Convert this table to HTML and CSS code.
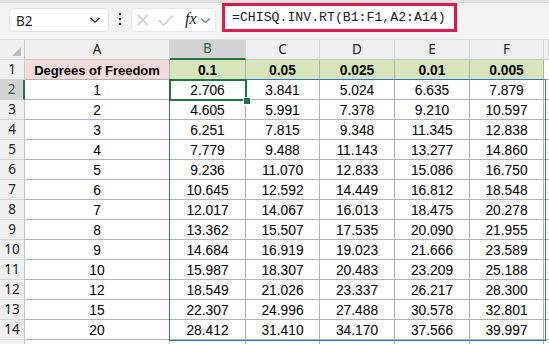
FILE: index.html
```html
<!DOCTYPE html>
<html>
<head>
<meta charset="utf-8">
<link rel="stylesheet" href="styles.css">
</head>
<body>
<div class="app">
  <div class="topstrip"></div>
  <div class="toolbar">
    <div class="namebox">
      <span class="nb-text">B2</span>
      <svg class="chev" width="12" height="8" viewBox="0 0 12 8"><path d="M1.5 2 L6 6.2 L10.5 2" fill="none" stroke="#333" stroke-width="1.3"/></svg>
    </div>
    <svg class="dots" width="4" height="14" viewBox="0 0 4 14"><circle cx="2" cy="2" r="1.3" fill="#333"/><circle cx="2" cy="7" r="1.3" fill="#333"/><circle cx="2" cy="12" r="1.3" fill="#333"/></svg>
    <div class="fxbox">
      <svg class="ic-x" width="12" height="12" viewBox="0 0 12 12"><path d="M1 1 L11 11 M11 1 L1 11" stroke="#c4c4c4" stroke-width="1.2" fill="none"/></svg>
      <svg class="ic-check" width="16" height="12" viewBox="0 0 16 12"><path d="M1 6.5 L5.5 11 L15 1.5" stroke="#c4c4c4" stroke-width="1.2" fill="none"/></svg>
      <span class="fx">fx</span>
      <svg class="chev2" width="11" height="7" viewBox="0 0 11 7"><path d="M1 1.5 L5.5 5.5 L10 1.5" fill="none" stroke="#777" stroke-width="1.2"/></svg>
    </div>
    <div class="formula">=CHISQ.INV.RT(B1:F1,A2:A14)</div>
  </div>
  <div class="sheet">
    <div class="grid">
      <div class="hd corner"><svg width="9" height="9" viewBox="0 0 9 9"><polygon points="9,0 9,9 0,9" fill="#bcbcbc"/></svg></div>
      <div class="hd col">A</div>
      <div class="hd col sel-col">B</div>
      <div class="hd col">C</div>
      <div class="hd col">D</div>
      <div class="hd col">E</div>
      <div class="hd col">F</div>
      <div class="hd col last"></div>

      <div class="hd row">1</div>
      <div class="c bold pink">Degrees of Freedom</div>
      <div class="c bold green">0.1</div>
      <div class="c bold green">0.05</div>
      <div class="c bold green">0.025</div>
      <div class="c bold green">0.01</div>
      <div class="c bold green">0.005</div>
      <div class="c last"></div>

      <div class="hd row sel-row">2</div>
      <div class="c">1</div><div class="c">2.706</div><div class="c">3.841</div><div class="c">5.024</div><div class="c">6.635</div><div class="c">7.879</div><div class="c last"></div>

      <div class="hd row">3</div>
      <div class="c">2</div><div class="c">4.605</div><div class="c">5.991</div><div class="c">7.378</div><div class="c">9.210</div><div class="c">10.597</div><div class="c last"></div>

      <div class="hd row">4</div>
      <div class="c">3</div><div class="c">6.251</div><div class="c">7.815</div><div class="c">9.348</div><div class="c">11.345</div><div class="c">12.838</div><div class="c last"></div>

      <div class="hd row">5</div>
      <div class="c">4</div><div class="c">7.779</div><div class="c">9.488</div><div class="c">11.143</div><div class="c">13.277</div><div class="c">14.860</div><div class="c last"></div>

      <div class="hd row">6</div>
      <div class="c">5</div><div class="c">9.236</div><div class="c">11.070</div><div class="c">12.833</div><div class="c">15.086</div><div class="c">16.750</div><div class="c last"></div>

      <div class="hd row">7</div>
      <div class="c">6</div><div class="c">10.645</div><div class="c">12.592</div><div class="c">14.449</div><div class="c">16.812</div><div class="c">18.548</div><div class="c last"></div>

      <div class="hd row">8</div>
      <div class="c">7</div><div class="c">12.017</div><div class="c">14.067</div><div class="c">16.013</div><div class="c">18.475</div><div class="c">20.278</div><div class="c last"></div>

      <div class="hd row">9</div>
      <div class="c">8</div><div class="c">13.362</div><div class="c">15.507</div><div class="c">17.535</div><div class="c">20.090</div><div class="c">21.955</div><div class="c last"></div>

      <div class="hd row">10</div>
      <div class="c">9</div><div class="c">14.684</div><div class="c">16.919</div><div class="c">19.023</div><div class="c">21.666</div><div class="c">23.589</div><div class="c last"></div>

      <div class="hd row">11</div>
      <div class="c">10</div><div class="c">15.987</div><div class="c">18.307</div><div class="c">20.483</div><div class="c">23.209</div><div class="c">25.188</div><div class="c last"></div>

      <div class="hd row">12</div>
      <div class="c">12</div><div class="c">18.549</div><div class="c">21.026</div><div class="c">23.337</div><div class="c">26.217</div><div class="c">28.300</div><div class="c last"></div>

      <div class="hd row">13</div>
      <div class="c">15</div><div class="c">22.307</div><div class="c">24.996</div><div class="c">27.488</div><div class="c">30.578</div><div class="c">32.801</div><div class="c last"></div>

      <div class="hd row">14</div>
      <div class="c">20</div><div class="c">28.412</div><div class="c">31.410</div><div class="c">34.170</div><div class="c">37.566</div><div class="c">39.997</div><div class="c last"></div>

      <div class="hd row"></div>
      <div class="c"></div><div class="c"></div><div class="c"></div><div class="c"></div><div class="c"></div><div class="c"></div><div class="c last"></div>
    </div>
    <div class="range"></div>
    <div class="active"></div>
    <div class="handle"></div>
  </div>
</div>
</body>
</html>
```

FILE: styles.css
```css
html, body {
  margin: 0;
  padding: 0;
  background: #ffffff;
  overflow: hidden;
}
.app {
  width: 549px;
  height: 344px;
  overflow: hidden;
  font-family: "Liberation Sans", Arial, sans-serif;
}
.topstrip {
  height: 3px;
  background: #e3e3e3;
  border-bottom: 1px solid #dadada;
  box-sizing: border-box;
}
.toolbar {
  height: 37px;
  background: #f3f3f3;
  display: flex;
  align-items: flex-end;
  padding: 0 0 7px 9px;
  box-sizing: border-box;
  border-bottom: 1px solid #dcdcdc;
}
.namebox {
  width: 100px;
  height: 24px;
  background: #ffffff;
  border: 1px solid #e1e1e1;
  border-radius: 4px;
  box-sizing: border-box;
  display: flex;
  align-items: center;
  justify-content: space-between;
  padding: 0 7px 0 6px;
  font-family: "Noto Sans", "Open Sans", sans-serif;
  font-size: 13.5px;
  color: #1f1f1f;
}
.nb-text {
  padding-top: 1px;
}
.dots {
  margin: 0 9px 6px 9px;
}
.fxbox {
  width: 85px;
  height: 24px;
  background: #ffffff;
  border: 1px solid #e6e6e6;
  border-radius: 4px;
  box-sizing: border-box;
  display: flex;
  align-items: center;
  padding: 0 3px 0 5px;
}
.ic-x {
  margin-right: 9px;
}
.ic-check {
  margin-right: 11px;
}
.fx {
  font-family: "Liberation Serif", "Times New Roman", serif;
  font-style: italic;
  font-size: 16px;
  color: #222;
  margin-right: 3px;
  margin-top: -2px;
}
.formula {
  margin-left: 6px;
  width: 235px;
  height: 29px;
  box-sizing: border-box;
  border: 3px solid #e0194f;
  background: #ffffff;
  font-family: "Liberation Mono", "Courier New", monospace;
  font-size: 13.2px;
  color: #1a1a1a;
  line-height: 23px;
  padding-left: 7px;
  white-space: nowrap;
}
.sheet {
  position: relative;
}
.grid {
  display: grid;
  grid-template-columns: 25px 145px 76px 74px 75px 75px 74px 5px;
  grid-auto-rows: 20px;
}
.hd {
  background: #f0f0f0;
  font-family: "Noto Sans", "Open Sans", sans-serif;
  font-size: 13.5px;
  color: #222;
  box-sizing: border-box;
  border-right: 1px solid #d4d4d4;
  border-bottom: 1px solid #d4d4d4;
  display: flex;
  align-items: center;
  justify-content: center;
  line-height: 1;
}
.corner {
  justify-content: flex-end;
  align-items: flex-end;
  padding: 0 3px 3px 0;
  border-right: 1px solid #c8c8c8;
}
.hd.col {
  border-bottom: 1px solid #c6c6c6;
}
.hd.row {
  border-right: 1px solid #c6c6c6;
}
.sel-col {
  background: #d3d3d3;
  color: #1d6b3f;
  border-bottom: 2px solid #217346 !important;
}
.sel-row {
  background: #d3d3d3;
  color: #1d6b3f;
  border-right: 2px solid #217346 !important;
}
.c {
  box-sizing: border-box;
  border-right: 1px solid #b2b2b2;
  border-bottom: 1px solid #b2b2b2;
  text-align: center;
  font-size: 13.8px;
  color: #000;
  line-height: 20px;
  padding-top: 1px;
  white-space: nowrap;
  overflow: hidden;
  background: #ffffff;
}
.c.last {
  border-right: none;
}
.bold {
  font-weight: bold;
}
.pink {
  background: #f2dcdb;
  font-size: 13px;
}
.green {
  background: #d8e4bc;
}
.range {
  position: absolute;
  left: 169px;
  top: 39px;
  width: 377px;
  height: 262px;
  box-sizing: border-box;
  border: 1px solid #3c6fcb;
}
.active {
  position: absolute;
  left: 169px;
  top: 39px;
  width: 78px;
  height: 22px;
  box-sizing: border-box;
  border: 2px solid #217346;
}
.handle {
  position: absolute;
  left: 243px;
  top: 57px;
  width: 6px;
  height: 6px;
  background: #217346;
  border: 1px solid #ffffff;
  box-sizing: content-box;
}
```
